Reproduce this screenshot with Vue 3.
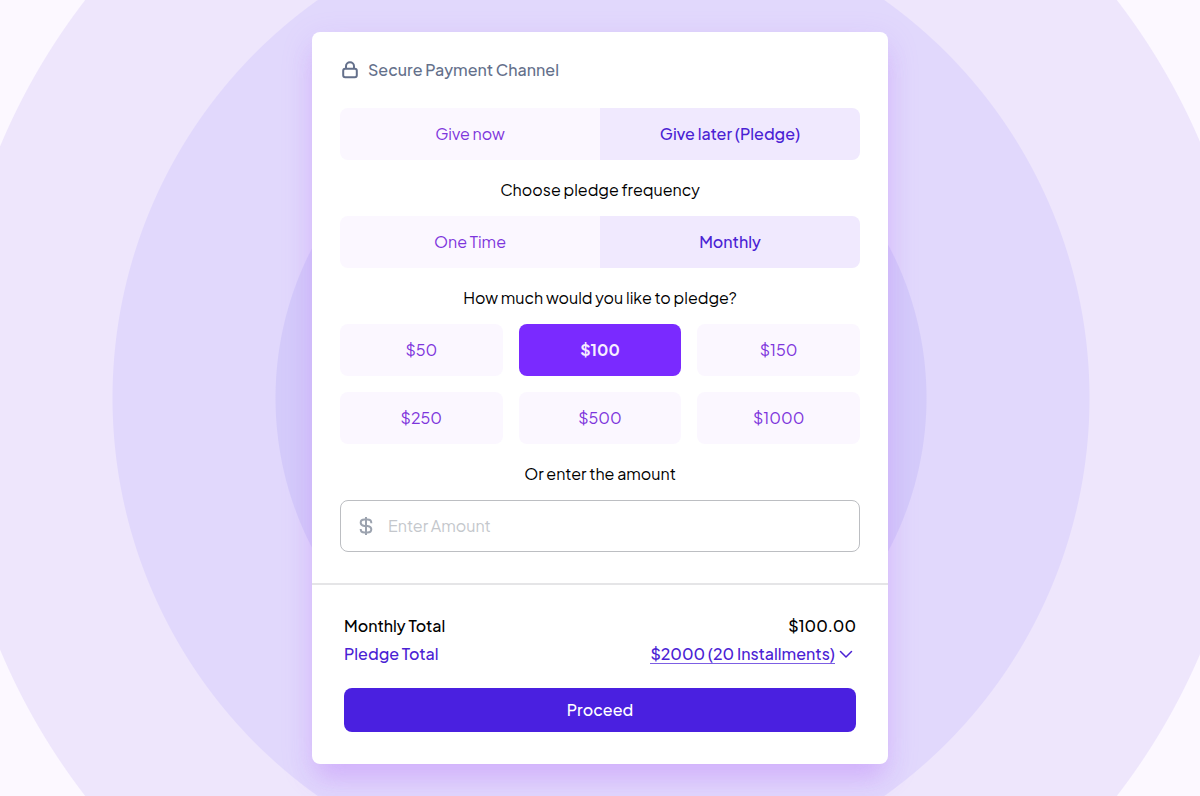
<script setup>
import { ref, computed } from 'vue'

const timing = ref('later')
const frequency = ref('monthly')
const amount = ref(100)
const custom = ref('')
const installments = 20

const timings = [
  { id: 'now', label: 'Give now' },
  { id: 'later', label: 'Give later (Pledge)' },
]
const frequencies = [
  { id: 'once', label: 'One Time' },
  { id: 'monthly', label: 'Monthly' },
]
const amounts = [50, 100, 150, 250, 500, 1000]

const current = computed(() => Number(custom.value) || amount.value)
</script>

<template>
  <main class="page">
    <form class="card" @submit.prevent>
      <div class="body">
        <header class="secure">
          <svg class="lock" viewBox="0 0 20 20" aria-hidden="true">
            <rect x="3.2" y="8.800" width="13.6" height="8.400" rx="2" />
            <path d="M6 8.800V6.300a4 4 0 0 1 8 0v2.500" />
          </svg>
          <span>Secure Payment Channel</span>
        </header>

        <div class="segmented" role="group" aria-label="Giving time">
          <button
            v-for="t in timings"
            :key="t.id"
            type="button"
            class="segment"
            :class="{ active: timing === t.id }"
            :aria-pressed="timing === t.id"
            @click="timing = t.id"
          >{{ t.label }}</button>
        </div>

        <p id="frequency-label" class="question">Choose pledge frequency</p>
        <div class="segmented" role="group" aria-labelledby="frequency-label">
          <button
            v-for="f in frequencies"
            :key="f.id"
            type="button"
            class="segment"
            :class="{ active: frequency === f.id }"
            :aria-pressed="frequency === f.id"
            @click="frequency = f.id"
          >{{ f.label }}</button>
        </div>

        <p id="amount-label" class="question">How much would you like to pledge?</p>
        <div class="amounts" role="group" aria-labelledby="amount-label">
          <button
            v-for="a in amounts"
            :key="a"
            type="button"
            class="amount"
            :class="{ chosen: amount === a }"
            :aria-pressed="amount === a"
            @click="amount = a"
          >${{ a }}</button>
        </div>

        <label class="question" for="custom-amount">Or enter the amount</label>
        <div class="field">
          <svg class="dollar" viewBox="0 0 20 20" aria-hidden="true">
            <path d="M10 1v18M15.300 7.200V7C15.300 4.800 13.800 3.600 11.500 3.600h-3C6.200 3.600 4.700 4.800 4.700 6.700c0 2.100 1.500 2.900 3.800 3.300h3c2.300.400 3.800 1.200 3.800 3.200 0 2-1.500 3.200-3.800 3.200h-3c-2.300 0-3.800-1.200-3.800-3.200V13" />
          </svg>
          <input id="custom-amount" v-model="custom" class="input" type="text" inputmode="decimal" placeholder="Enter Amount" />
        </div>
      </div>

      <footer class="summary">
        <div class="row total">
          <span>Monthly Total</span>
          <span>${{ current.toFixed(2) }}</span>
        </div>
        <div class="row pledge">
          <span>Pledge Total</span>
          <button type="button" class="plan">
            <span class="plan-text">${{ current * installments }} ({{ installments }} Installments)</span>
            <svg class="chevron" viewBox="0 0 16 16" aria-hidden="true"><path d="M2.500 5.500L8 11l5.500-5.500" /></svg>
          </button>
        </div>
        <button type="submit" class="proceed">Proceed</button>
      </footer>
    </form>
  </main>
</template>

<style>
body {
  margin: 0;
}
</style>

<style scoped>
.page {
  box-sizing: border-box;
  min-height: 100vh;
  display: flex;
  align-items: center;
  justify-content: center;
  padding: 32px 16px;
  font-family: "Plus Jakarta Sans", Inter, "Liberation Sans", sans-serif;
  font-size: 16px;
  line-height: 24px;
  color: #000;
  background: radial-gradient(
    circle at calc(50% + 1px) 50%,
    #d4cbfa 325px,
    #e1d8fc 326px 488px,
    #eee6fc 489px 651px,
    #fcf8ff 652px
  );
}

.card {
  width: 100%;
  max-width: 576px;
  background: #fff;
  border-radius: 8px;
  box-shadow: 0 20px 25px -5px rgba(192, 132, 252, 0.3), 0 10px 32px rgba(184, 110, 250, 0.2);
}

.body {
  padding: 26px 28px 31px;
}

.secure {
  display: flex;
  align-items: center;
  gap: 8px;
  margin-bottom: 26px;
  color: #64708b;
  font-weight: 500;
}

.lock {
  width: 20px;
  height: 20px;
  fill: none;
  stroke: currentColor;
  stroke-width: 2;
}

.segmented {
  display: grid;
  grid-template-columns: 1fr 1fr;
  border-radius: 8px;
  overflow: hidden;
}

button,
input {
  font: inherit;
  border: 0;
  margin: 0;
}

button {
  cursor: pointer;
}

.segment,
.amount {
  padding: 14px 8px;
  background: #fbf7ff;
  color: #7e35dc;
}

.segment.active {
  background: #f0e9fe;
  color: #4a22d4;
  font-weight: 500;
}

.question {
  display: block;
  margin: 18px 0 14px;
  text-align: center;
}

.amounts {
  display: grid;
  grid-template-columns: repeat(3, 1fr);
  gap: 16px;
}

.amount {
  border-radius: 8px;
}

.amount.chosen {
  background: #7a2aff;
  color: #f6edff;
  font-weight: 700;
}

.field {
  display: flex;
  align-items: center;
  gap: 12px;
  padding: 0 15px;
  border: 1px solid #bcbec2;
  border-radius: 8px;
}

.field:focus-within {
  border-color: #7a2aff;
}

.dollar {
  flex: none;
  width: 20px;
  height: 20px;
  fill: none;
  stroke: #9ca3af;
  stroke-width: 2;
}

.input {
  box-sizing: border-box;
  flex: 1;
  min-width: 0;
  height: 50px;
  padding: 0 0 2px;
  background: transparent;
  outline: 0;
}

.input::placeholder {
  color: #c4c7cc;
  opacity: 1;
}

.summary {
  padding: 27px 32px 32px;
  border-top: 2px solid #e5e5e7;
}

.row {
  display: flex;
  justify-content: space-between;
  line-height: 28px;
  font-weight: 500;
}

.pledge {
  color: #4a22d4;
}

.plan {
  display: flex;
  align-items: center;
  gap: 3px;
  padding: 0 2px 0 0;
  background: none;
  color: inherit;
  line-height: 28px;
}

.plan-text {
  line-height: 19px;
  border-bottom: 1px solid #7c5ee4;
}

.chevron {
  width: 16px;
  height: 16px;
  fill: none;
  stroke: currentColor;
  stroke-width: 1.5;
  stroke-linecap: round;
  stroke-linejoin: round;
}

.proceed {
  width: 100%;
  margin-top: 20px;
  padding: 10px;
  border-radius: 8px;
  background: #4a20e0;
  color: #fff;
  font-weight: 500;
}
</style>
